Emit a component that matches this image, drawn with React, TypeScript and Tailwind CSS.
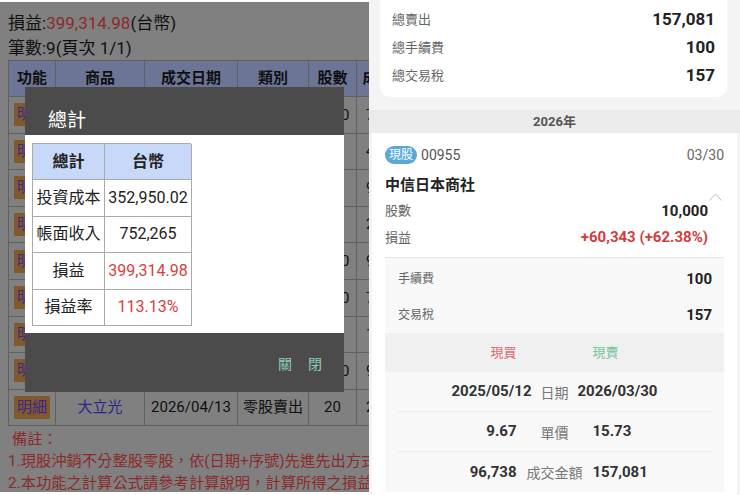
import React from "react";

// background table rows (mostly hidden behind the dialog)
const rows = [
  { name: "台積電", date: "2025/05/12", type: "現股買進", qty: "1000", amt: "75,300" },
  { name: "中信日本", date: "2025/05/12", type: "現股買進", qty: "5", amt: "483" },
  { name: "鴻海", date: "2025/08/20", type: "零股買進", qty: "8", amt: "912" },
  { name: "聯發科", date: "2025/11/03", type: "零股買進", qty: "50", amt: "24,150" },
  { name: "中信日本", date: "2026/03/30", type: "現股賣出", qty: "1000", amt: "967" },
  { name: "台積電", date: "2026/03/30", type: "現股賣出", qty: "1000", amt: "78,810" },
  { name: "鴻海", date: "2026/04/01", type: "零股賣出", qty: "8", amt: "1,640" },
  { name: "聯發科", date: "2026/04/10", type: "零股賣出", qty: "5000", amt: "918" },
  { name: "大立光", date: "2026/04/13", type: "零股賣出", qty: "20", amt: "2,960" },
];

const summary = [
  { label: "投資成本", value: "352,950.02", red: false },
  { label: "帳面收入", value: "752,265", red: false },
  { label: "損益", value: "399,314.98", red: true },
  { label: "損益率", value: "113.13%", red: true },
];

const topStats = [
  { label: "總賣出", value: "157,081" },
  { label: "總手續費", value: "100" },
  { label: "總交易稅", value: "157" },
];

const tradeRows = [
  { buy: "2025/05/12", label: "日期", sell: "2026/03/30", mid: "w-[46px]" },
  { buy: "9.67", label: "單價", sell: "15.73", mid: "w-[76px]" },
  { buy: "96,738", label: "成交金額", sell: "157,081", mid: "w-[76px]" },
];

function LeftScreen() {
  return (
    <div className="relative w-[369px] h-[490px] mt-[2px] overflow-hidden bg-[#d6d6d6]">
      {/* page behind the dialog */}
      <div className="pl-2 pt-[8px] text-[#1a1a1a]">
        <div className="text-[17px] leading-[26px] whitespace-nowrap">
          損益:<span className="text-[#e84848]">399,314.98</span>(台幣)
        </div>
        <div className="text-[17px] leading-[24px] whitespace-nowrap">筆數:9(頁次 1/1)</div>
        <div className="w-[420px] border-l border-t border-[#a0a0a0]">
          <div className="grid grid-cols-[47px_89px_93px_71px_48px_72px] h-[36px] bg-[#b4c4fa] text-[15px] font-bold">
            {["功能", "商品", "成交日期", "類別", "股數", "成交金額"].map((h) => (
              <div key={h} className="flex items-center justify-center border-r border-b border-[#a0a0a0] whitespace-nowrap overflow-hidden">
                {h}
              </div>
            ))}
          </div>
          {rows.map((r, i) => (
            <div key={i} className="grid grid-cols-[47px_89px_93px_71px_48px_72px] h-[36.6px] text-[15px]">
              <div className="flex items-center justify-center border-r border-b border-[#a0a0a0]">
                <span className="bg-[#d4964a] text-[#6442e0] px-[3px] leading-[23px]">明細</span>
              </div>
              <div className="flex items-center justify-center border-r border-b border-[#a0a0a0] text-[#4343e0]">{r.name}</div>
              <div className="flex items-center justify-center border-r border-b border-[#a0a0a0]">{r.date}</div>
              <div className="flex items-center justify-center border-r border-b border-[#a0a0a0]">{r.type}</div>
              <div className="flex items-center justify-center border-r border-b border-[#a0a0a0]">{r.qty}</div>
              <div className="flex items-center pl-[9px] border-r border-b border-[#a0a0a0]">{r.amt}</div>
            </div>
          ))}
        </div>
        <div className="pt-[2px] text-[15.3px] leading-[22px] text-[#e84848] whitespace-nowrap">
          <div className="pl-[4px]">備註：</div>
          <div>1.現股沖銷不分整股零股，依(日期+序號)先進先出方式</div>
          <div>2.本功能之計算公式請參考計算說明，計算所得之損益</div>
        </div>
      </div>

      {/* dim */}
      <div className="absolute inset-0 bg-black/40" />

      {/* dialog */}
      <div className="absolute left-[25px] top-[85px] w-[319px]">
        <div className="h-[48px] bg-[#4b4b4b] pl-[23px] pt-[21px] text-[19px] leading-[25px] text-white">總計</div>
        <div className="bg-white h-[198px] pl-[7px] pt-[8px]">
          <div className="w-[159px] border-l border-t border-[#a9a9a9] text-[16px] text-[#222]">
            <div className="grid grid-cols-[72px_87px] h-[36px] bg-[#c8d8f8] font-bold">
              <div className="flex items-center justify-center border-r border-b border-[#a9a9a9]">總計</div>
              <div className="flex items-center justify-center border-r border-b border-[#a9a9a9]">台幣</div>
            </div>
            {summary.map((s) => (
              <div key={s.label} className="grid grid-cols-[72px_87px] h-[36.5px]">
                <div className="flex items-center justify-center border-r border-b border-[#a9a9a9]">{s.label}</div>
                <div className={`flex items-center justify-center border-r border-b border-[#a9a9a9] ${s.red ? "text-[#d8403c]" : ""}`}>
                  {s.value}
                </div>
              </div>
            ))}
          </div>
        </div>
        <div className="h-[59px] bg-[#4b4b4b] flex items-center justify-end pr-[22px] pt-[4px]">
          <span className="text-[14px] tracking-[16px] mr-[-16px] text-[#8fcdbb]">關閉</span>
        </div>
      </div>
    </div>
  );
}

function RightScreen() {
  return (
    <div className="flex-1 h-[495px] bg-[#f4f4f4] overflow-hidden text-[#222]">
      <div className="ml-[11px] mr-[13px] bg-white rounded-b-[10px] pt-[6px] pb-[7px] px-[12px]">
        {topStats.map((s) => (
          <div key={s.label} className="flex items-center justify-between h-[28px]">
            <span className="text-[13px] text-[#666]">{s.label}</span>
            <span className="text-[17px] font-bold text-[#222]">{s.value}</span>
          </div>
        ))}
      </div>

      <div className="mt-[13px] h-[23px] bg-[#ebebeb] flex items-center justify-center text-[13px] font-bold text-[#555]">
        2026年
      </div>

      <div className="relative mx-[3px] bg-white px-[13px] pt-[12px] pb-[3px]">
        <div className="flex items-center h-[20px]">
          <span className="bg-[#5aa8d8] text-white text-[12px] leading-[18px] rounded-full px-[4px]">現股</span>
          <span className="ml-[4px] text-[14px] text-[#555]">00955</span>
          <span className="ml-auto text-[14px] text-[#666]">03/30</span>
        </div>
        <div className="mt-[8px] h-[24px] flex items-center text-[15px] font-bold">中信日本商社</div>
        <svg className="absolute right-[15px] top-[60px]" width="13" height="8" viewBox="0 0 13 8">
          <polyline points="0.5,7.5 6.5,1 12.5,7.5" fill="none" stroke="#bbb" strokeWidth="1" />
        </svg>
        <div className="pr-[16px] mt-[1px]">
          <div className="flex items-center justify-between h-[26px]">
            <span className="text-[13px] text-[#666]">股數</span>
            <span className="text-[15px] font-bold">10,000</span>
          </div>
          <div className="flex items-center justify-between h-[27px]">
            <span className="text-[13px] text-[#666]">損益</span>
            <span className="text-[15px] font-bold text-[#d63b3b]">+60,343 (+62.38%)</span>
          </div>
        </div>
        <div className="mt-[6px] border-t border-[#e4e4e4] bg-[#f8f8f8] pt-[3px]">
          <div className="flex items-center justify-between h-[36px] pl-[13px] pr-[12px]">
            <span className="text-[12px] text-[#666]">手續費</span>
            <span className="text-[15px] font-bold">100</span>
          </div>
          <div className="flex items-center justify-between h-[36px] pl-[13px] pr-[12px]">
            <span className="text-[12px] text-[#666]">交易稅</span>
            <span className="text-[15px] font-bold">157</span>
          </div>
          <div className="flex items-center h-[39px] bg-[#f0f0f0] text-[13px]">
            <div className="flex-1 text-right text-[#df6b6b]">現買</div>
            <div className="w-[76px]" />
            <div className="flex-1 text-[#74c49a]">現賣</div>
          </div>
          {tradeRows.map((t, i) => (
            <div key={t.label} className={`mx-[13px] flex items-center h-[40px] ${i < 2 ? "border-b border-[#ececec]" : ""}`}>
              <div className="flex-1 text-right text-[15px] font-bold text-[#333]">{t.buy}</div>
              <div className={`${t.mid} text-center text-[14px] text-[#777] pt-[3px] whitespace-nowrap`}>{t.label}</div>
              <div className="flex-1 text-[15px] font-bold text-[#333]">{t.sell}</div>
            </div>
          ))}
        </div>
      </div>
    </div>
  );
}

export default function App() {
  return (
    <div className="w-[740px] h-[495px] flex bg-white overflow-hidden font-[Roboto,'Noto_Sans_CJK_TC',sans-serif]">
      <LeftScreen />
      <RightScreen />
    </div>
  );
}
